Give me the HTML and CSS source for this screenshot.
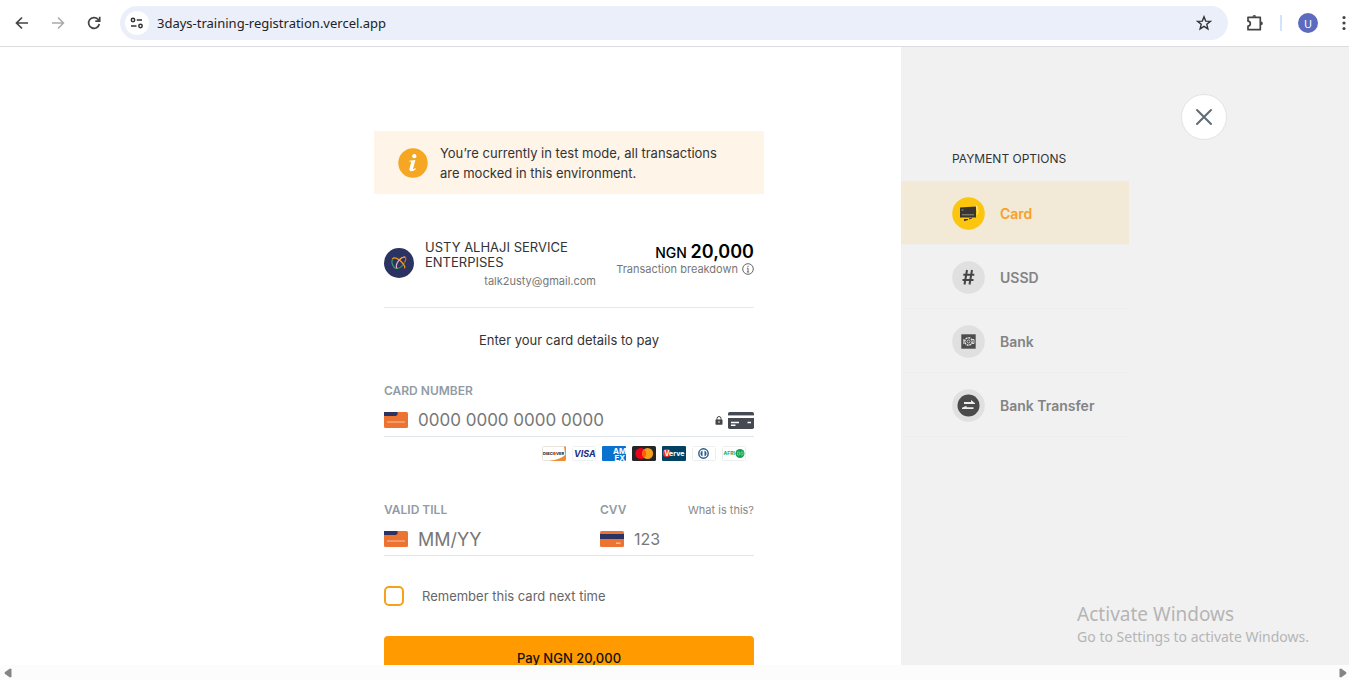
FILE: index.html
```html
<!DOCTYPE html>
<html lang="en">
<head>
    <meta charset="UTF-8">
    <meta name="viewport" content="width=device-width, initial-scale=1.0">
    <title>Checkout</title>
    <link rel="stylesheet" href="styles.css">
</head>
<body>
<header class="toolbar">
    <button class="tool" type="button" aria-label="Back">
        <svg width="16" height="16" viewBox="0 0 16 16" fill="none" stroke="#444" stroke-width="1.7"><path d="M14 8H3M8 2.5 2.5 8 8 13.5"/></svg>
    </button>
    <button class="tool" type="button" aria-label="Forward" disabled>
        <svg width="16" height="16" viewBox="0 0 16 16" fill="none" stroke="#aaa" stroke-width="1.5"><path d="M2 8h11M8 2.5 13.5 8 8 13.5"/></svg>
    </button>
    <button class="tool" type="button" aria-label="Reload">
        <svg width="16" height="16" viewBox="0 0 16 16" fill="none" stroke="#444" stroke-width="1.7"><path d="M13.3 9A5.4 5.4 0 1 1 12 4.3l1.6 1.7M13.7 1.8v4.4H9.3"/></svg>
    </button>
    <div class="address">
        <button class="site-info" type="button" aria-label="Site information">
            <svg width="14" height="12" viewBox="0 0 14 12" fill="none" stroke="#333" stroke-width="1.5"><circle cx="3" cy="3" r="1.7"/><path d="M6.8 3H12M1 9h5.5"/><circle cx="10.5" cy="9" r="1.7"/></svg>
        </button>
        <input class="url" type="text" aria-label="Address" value="3days-training-registration.vercel.app">
        <button class="star" type="button" aria-label="Bookmark">
            <svg width="16" height="16" viewBox="0 0 16 16" fill="none" stroke="#333" stroke-width="1.4"><path d="m8 1.8 1.7 4.3 4.6.3-3.5 2.9 1.1 4.6L8 11.4l-3.9 2.5 1.1-4.6-3.5-2.9 4.6-.3z"/></svg>
        </button>
    </div>
    <button class="tool extensions" type="button" aria-label="Extensions">
        <svg width="18" height="18" viewBox="0 0 18 18" fill="none" stroke="#444" stroke-width="1.7"><path d="M2 3.3h12.3v12.4H2v-3.6c3.1 0 3.1-5 0-5z" stroke-linejoin="round"/><path d="M6.5 2.7a1.8 1.8 0 0 1 3.6 0zM15 7.6a1.8 1.8 0 0 1 0 3.6z" fill="#444" stroke="none"/></svg>
    </button>
    <span class="separator"></span>
    <button class="avatar" type="button">U</button>
    <button class="tool menu" type="button" aria-label="Menu">
        <svg width="4" height="16" viewBox="0 0 4 16" fill="#444"><circle cx="2" cy="2.5" r="1.6"/><circle cx="2" cy="8" r="1.6"/><circle cx="2" cy="13.5" r="1.6"/></svg>
    </button>
</header>

<div class="page">
    <main class="content">
        <form class="checkout">
            <div class="alert">
                <svg class="alert-icon" width="30" height="30" viewBox="0 0 30 30"><circle cx="15" cy="15" r="14.7" fill="#f5a623"/><circle cx="16.3" cy="8.2" r="2.1" fill="#fff"/><path d="M11.3 12.7 17.4 11.9l-2.3 8.6c-.2 1.1.9.7 2.3-.4l.5.8c-3.3 3.3-7.2 2.7-6.5-.2l1.7-6.3c.2-.8-.4-.9-1.8-.8z" fill="#fff"/></svg>
                <p class="alert-text">You’re currently in test mode, all transactions are mocked in this environment.</p>
            </div>

            <section class="summary">
                <svg class="logo" width="30" height="30" viewBox="0 0 30 30" fill="none" stroke-width="1.2"><circle cx="15" cy="15" r="15" fill="#2a3362"/><path d="M8.500 11c-1.500 3 .3 8.500 3.500 9.400 3.300.8 7-2.900 8.500-6" stroke="#3c9d61"/><path d="M8.500 11c1.500-2.800 6.500 0 9.500 3.500 2 2.300 3.300 5 2.500 5.900" stroke="#ff9b00"/><path d="M20.500 14.400c1.500-2.400 1.800-4.600.7-5.200" stroke="#ff5805"/><path d="M21.200 9.200c-2.200-.9-6.600 2.300-8.200 6-1 2.600-.9 4.600.3 5" stroke="#f5afcb"/><path d="M15 12c2.300-2.200 4.700-3.400 6.200-2.800" stroke="#ff9b00"/></svg>
                <div class="merchant">
                    <h1 class="merchant-name">USTY ALHAJI SERVICE ENTERPISES</h1>
                    <p class="email">talk2usty@gmail.com</p>
                </div>
                <div class="total">
                    <p class="amount">NGN <strong>20,000</strong></p>
                    <button class="breakdown" type="button">Transaction breakdown
                        <svg width="12" height="12" viewBox="0 0 12 12" fill="none" stroke="#666"><circle cx="6" cy="6" r="5.3"/><path d="M6 5.2v3.9M6 2.8v1.3M4.9 9h2.2M4.9 5.3H6"/></svg>
                    </button>
                </div>
            </section>

            <h2 class="prompt">Enter your card details to pay</h2>

            <div class="field">
                <label for="card-number">CARD NUMBER</label>
                <div class="field-row">
                    <svg width="24" height="16" viewBox="0 0 24 16"><rect width="24" height="16" rx="1.5" fill="#ed7333"/><path d="M0 0h13.5v2.6L12 4H0z" fill="#2a3362"/><path d="M3 10h18" stroke="#f9c3a3"/></svg>
                    <input type="text" id="card-number" placeholder="0000 0000 0000 0000">
                    <svg width="8" height="9" viewBox="0 0 8 9"><path d="M2 4V2.5a2 2 0 0 1 4 0V4" fill="none" stroke="#444"/><rect x=".5" y="3.5" width="7" height="5.2" rx=".6" fill="#444"/><path d="M4 5v2" stroke="#ddd"/></svg>
                    <svg width="26" height="17" viewBox="0 0 26 17"><rect width="26" height="17" rx="1.7" fill="#454952"/><path d="M0 4.7h26" stroke="#fff" stroke-width="2.6"/><path d="M3 10.5h8M3 13.2h4.5M19.5 10.5H23" stroke="#fff" stroke-width="1.4"/></svg>
                </div>
            </div>

            <div class="brands">
                <svg width="24" height="15" viewBox="0 0 24 15"><rect x=".5" y=".5" width="23" height="14" rx="1" fill="#fff" stroke="#e9e3de"/><path d="M24 8v5.5a1.5 1.5 0 0 1-1.500 1.500H7c8-.8 14-3.500 17-7zM22 .5h2V8h-.8z" fill="#f18b32"/><text x="1" y="9" font-size="4" font-weight="bold" fill="#111">DISC</text><text x="14" y="9" font-size="4" font-weight="bold" fill="#111">VER</text><circle cx="12.2" cy="7.5" r="1.7" fill="#e86b25"/></svg>
                <svg width="24" height="15" viewBox="0 0 24 15"><rect x=".5" y=".5" width="23" height="14" rx="1" fill="#fff" stroke="#f0f0f0"/><text x="2" y="11" font-size="9" font-style="italic" font-weight="bold" fill="#252d7f">VISA</text></svg>
                <svg width="24" height="15" viewBox="0 0 24 15"><rect width="24" height="15" rx="1" fill="#0872ce"/><text x="11" y="7.5" font-size="8" font-weight="bold" fill="#fff">AM</text><text x="12.5" y="14.5" font-size="8" font-weight="bold" fill="#fff">EX</text></svg>
                <svg width="24" height="15" viewBox="0 0 24 15"><rect width="24" height="15" rx="1.5" fill="#252525"/><circle cx="8.8" cy="7.5" r="5.5" fill="#eb001b"/><circle cx="15.6" cy="7.5" r="5.5" fill="#f79e1b"/><path d="M12.2 3.2a5.5 5.5 0 0 1 0 8.6 5.5 5.5 0 0 1 0-8.6z" fill="#ff5f00"/></svg>
                <svg width="24" height="15" viewBox="0 0 24 15"><rect width="24" height="15" rx="1" fill="#00425f"/><circle cx="4.8" cy="7" r="4" fill="#ee312a"/><text x="2.3" y="10" font-size="7" font-weight="bold" fill="#fff">Verve</text></svg>
                <svg width="24" height="15" viewBox="0 0 24 15"><rect x=".5" y=".5" width="23" height="14" rx="1" fill="#fff" stroke="#eee"/><circle cx="11.5" cy="7.5" r="4.7" fill="none" stroke="#285b8c" stroke-width="1.4"/><path d="M10.5 4.5a3.2 3.2 0 0 0 0 6zM12.5 4.5a3.2 3.2 0 0 1 0 6z" fill="#285b8c"/></svg>
                <svg width="24" height="15" viewBox="0 0 24 15"><rect x=".5" y=".5" width="23" height="14" rx="1" fill="#fff" stroke="#eee"/><text x="1.5" y="9.300" font-size="5" font-weight="bold" fill="#27a45b">AFRI</text><circle cx="18" cy="7.5" r="4.5" fill="#12a350"/><path d="M15.500 6v3h2V6zm3.500 0v3h2V6z" fill="none" stroke="#8bd3aa" stroke-width=".7"/></svg>
            </div>

            <div class="field-group">
                <div class="field expiry">
                    <label for="expiry">VALID TILL</label>
                    <div class="field-row">
                        <svg width="24" height="16" viewBox="0 0 24 16"><rect width="24" height="16" rx="1.5" fill="#ed7333"/><path d="M0 0h13.5v2.6L12 4H0z" fill="#2a3362"/><path d="M3 10h18" stroke="#f9c3a3"/></svg>
                        <input class="expiry-input" type="text" id="expiry" placeholder="MM/YY">
                    </div>
                </div>
                <div class="field cvv">
                    <div class="label-row">
                        <label for="cvv">CVV</label>
                        <a class="help" href="#">What is this?</a>
                    </div>
                    <div class="field-row">
                        <svg width="24" height="16" viewBox="0 0 24 16"><rect width="24" height="16" rx="1.5" fill="#ed7333"/><path d="M0 3h24v5H0z" fill="#2a3362"/><path d="M16 12.2h4.5" stroke="#f9c3a3" stroke-width="1.4"/></svg>
                        <input class="cvv-input" type="text" id="cvv" placeholder="123">
                    </div>
                </div>
            </div>

            <div class="remember">
                <input type="checkbox" id="remember">
                <label for="remember">Remember this card next time</label>
            </div>

            <button class="pay" type="submit">Pay NGN 20,000</button>
        </form>
    </main>

    <aside class="sidebar">
        <nav class="options">
            <h2 class="options-title">PAYMENT OPTIONS</h2>
            <button class="option active" type="button">
                <svg width="33" height="33" viewBox="0 0 33 33"><circle cx="16.5" cy="16.5" r="16.3" fill="#fcc60e"/><path d="m22 10 3-.8v4l1-.3-.5 4-1 .5" fill="none" stroke="#fff0b0"/><path d="M8 10.5 24 9.5v11H8z" fill="#3a3530"/><path d="M10 17.8h12M9.5 13h2" stroke="#99917b"/><path d="M12 22.5h4l-4 1.200M17 22l3-1" stroke="#3a3530" fill="none"/></svg>
                Card
            </button>
            <button class="option" type="button">
                <svg width="33" height="33" viewBox="0 0 33 33" fill="none" stroke="#444" stroke-width="2"><circle cx="16.5" cy="16.5" r="16.3" fill="#e0e0e0" stroke="none"/><path d="m15 9-2.500 14.500M20 9l-2.500 14.500M11.300 13.700h11M10.500 19h11"/></svg>
                USSD
            </button>
            <button class="option" type="button">
                <svg width="33" height="33" viewBox="0 0 33 33" fill="none"><circle cx="16.5" cy="16.5" r="16.3" fill="#e0e0e0"/><path d="M9.3 9.3h14.4v14.4H9.3z" fill="#4d4d4d"/><g stroke="#e5e5e5"><circle cx="16.5" cy="16.5" r="3.7" stroke-width="1.4" stroke-dasharray="2 .8"/><circle cx="16.5" cy="16.5" r="1.5" stroke-width=".8"/><path d="M11.800 14v5M19.500 14.500h2.500v4h-2.500" stroke-width=".9"/></g></svg>
                Bank
            </button>
            <button class="option" type="button">
                <svg width="33" height="33" viewBox="0 0 33 33"><circle cx="16.5" cy="16.5" r="16.3" fill="#e0e0e0"/><circle cx="16.5" cy="16.5" r="11" fill="#4a4a4a"/><path d="M12 13h7v-2l4 3.300v.7H12zM21.500 18.200h-7v-1.500l-4.500 2v1.400h11.500z" fill="#eee"/></svg>
                Bank Transfer
            </button>
        </nav>
        <button class="close" type="button" aria-label="Close">
            <svg width="18" height="18" viewBox="0 0 18 18" fill="none" stroke="#5f6b75" stroke-width="2" stroke-linecap="round"><path d="m2 2 14 14M16 2 2 16"/></svg>
        </button>
    </aside>
</div>

<footer class="scrollbar">
    <svg width="8" height="10" viewBox="0 0 8 10" fill="#858585"><path d="M7.5 1v8L6 9.500 1 6Q0 5 1 4L6 .5z"/></svg>
    <svg width="8" height="10" viewBox="0 0 8 10" fill="#858585"><path d="M.5 1v8l1.500.5L7 6q1-1 0-2L2 .5z"/></svg>
</footer>

<div class="watermark">
    <p class="watermark-title">Activate Windows</p>
    <p>Go to Settings to activate Windows.</p>
</div>
</body>
</html>
```

FILE: styles.css
```css
* {
    box-sizing: border-box;
}
body {
    display: flex;
    flex-direction: column;
    height: 100vh;
    margin: 0;
    overflow: hidden;
    font-family: Inter, "Liberation Sans", sans-serif;
    background-color: #fff;
    color: #333;
}
h1,
h2,
p {
    margin: 0;
    font-weight: 400;
}
button,
input {
    padding: 0;
    border: none;
    background: none;
    font-family: inherit;
}
button {
    cursor: pointer;
}
svg {
    display: block;
    flex-shrink: 0;
}

/* browser bar */
.toolbar {
    display: flex;
    flex-shrink: 0;
    align-items: center;
    height: 47px;
    padding-left: 14px;
    border-bottom: 1px solid #dcdcdc;
    font-family: "Noto Sans", "Open Sans", sans-serif;
}
.tool {
    margin-right: 20px;
}
.address {
    display: flex;
    flex: 1;
    align-items: center;
    height: 34px;
    margin-left: -2px;
    padding: 0 16px 0 5px;
    border-radius: 17px;
    background-color: #ebeff9;
}
.site-info {
    display: flex;
    align-items: center;
    justify-content: center;
    width: 24px;
    height: 24px;
    border-radius: 50%;
    background-color: #fff;
}
.url {
    flex: 1;
    margin-left: 8px;
    font-size: 13px;
    color: #222;
}
.extensions {
    margin: 0 16px 0 18px;
}
.separator {
    width: 2px;
    height: 16px;
    background-color: #d5e2fb;
}
.avatar {
    width: 20px;
    height: 20px;
    margin: 0 24px 0 16px;
    border-radius: 50%;
    background-color: #5c6bc0;
    color: #fff;
    font-size: 11px;
}
.menu {
    margin-right: 3px;
}

.page {
    display: flex;
    flex: 1;
    min-height: 0;
    overflow: hidden;
}
.content {
    display: flex;
    flex: 1;
    align-items: flex-start;
    justify-content: flex-end;
    padding: 84px 137px 0 0;
}
.checkout {
    width: 390px;
    padding-bottom: 40px;
}
.alert {
    display: flex;
    align-items: center;
    gap: 12px;
    padding: 12px 24px 11px;
    background-color: #fff4e8;
}
.alert-text {
    font-size: 13px;
    line-height: 20px;
}

.summary {
    display: flex;
    align-items: flex-start;
    margin: 0 10px;
    padding: 46px 0 20px;
    border-bottom: 1px solid #e4e9ea;
}
.logo {
    margin: 8px 11px 0 0;
}
.merchant {
    width: 171px;
}
.merchant-name {
    font-size: 13px;
    line-height: 15px;
}
/* the mail line is cropped a little below the baseline */
.email {
    height: 13px;
    margin-top: 4px;
    overflow: hidden;
    font-size: 11px;
    line-height: 15px;
    text-align: right;
    color: #777;
}
.total {
    flex: 1;
    padding-top: 3px;
    text-align: right;
}
.amount {
    font-size: 14px;
    font-weight: 500;
    line-height: 18px;
    color: #000;
}
.amount strong {
    font-size: 18px;
    font-weight: 600;
}
.breakdown {
    display: flex;
    align-items: center;
    justify-content: flex-end;
    gap: 4px;
    width: 100%;
    font-size: 11px;
    line-height: 14px;
    white-space: nowrap;
    color: #777;
}
.prompt {
    margin: 22px 0 34px;
    font-size: 13px;
    line-height: 20px;
    text-align: center;
}

.field {
    margin: 0 10px;
}
.field label {
    display: block;
    font-size: 12px;
    font-weight: 600;
    line-height: 14px;
    color: #929ba5;
}
.field-row {
    display: flex;
    align-items: center;
    height: 39px;
    padding-top: 6px;
    border-bottom: 1px solid #e0e7ec;
    gap: 5px;
}
.field-row input {
    flex: 1;
    min-width: 0;
    height: 24px;
    margin-left: 5px;
    font-size: 17px;
    color: #333;
}
.field-row input::placeholder {
    color: #777;
    opacity: 1;
}
.field-row .expiry-input {
    font-size: 18px;
}
.field-row .cvv-input {
    font-size: 16px;
}
.brands {
    display: flex;
    justify-content: flex-end;
    gap: 6px;
    margin: 9px 18px 42px 0;
}
.field-group {
    display: flex;
    margin: 0 10px;
}
.field-group .field {
    margin: 0;
}
.expiry {
    flex: 1;
    min-width: 0;
}
.cvv {
    width: 154px;
}
.label-row {
    display: flex;
    justify-content: space-between;
}
.help {
    font-size: 11px;
    line-height: 14px;
    text-decoration: none;
    color: #888;
}
.remember {
    display: flex;
    align-items: center;
    gap: 18px;
    margin: 30px 10px;
    font-size: 13px;
    line-height: 20px;
    color: #666;
}
.remember input {
    appearance: none;
    width: 20px;
    height: 20px;
    margin: 0;
    border: 2px solid #f5a11c;
    border-radius: 5px;
}
.pay {
    display: block;
    width: calc(100% - 20px);
    height: 44px;
    margin: 0 10px;
    border-radius: 4px;
    background-color: #ff9b00;
    font-size: 13px;
    font-weight: 500;
    color: #111;
}

/* payment options */
.sidebar {
    display: flex;
    align-items: flex-start;
    align-self: stretch;
    width: 448px;
    background-color: #f1f1f1;
}
.options {
    width: 228px;
    padding-top: 102px;
}
.options-title {
    margin: 0 0 12px 51px;
    font-size: 12px;
    line-height: 20px;
}
.option {
    display: flex;
    align-items: center;
    gap: 15px;
    width: 100%;
    height: 64px;
    padding: 2px 0 0 51px;
    border-bottom: 1px solid #eee;
    font-size: 14px;
    font-weight: 600;
    color: #838383;
}
.option.active {
    background-color: #f2ead7;
    color: #f7a028;
}
.close {
    display: flex;
    align-items: center;
    justify-content: center;
    width: 46px;
    height: 46px;
    margin: 47px 0 0 52px;
    border: 1px solid #e3e3e3;
    border-radius: 50%;
    background-color: #fff;
}

.scrollbar {
    display: flex;
    flex-shrink: 0;
    align-items: center;
    justify-content: space-between;
    height: 15px;
    padding: 0 2px 0 4px;
    background-color: #fcfcfc;
}
.watermark {
    position: absolute;
    right: 40px;
    bottom: 33px;
    font-family: "Noto Sans", "Open Sans", sans-serif;
    font-size: 14px;
    line-height: 20px;
    color: #b5b5b5;
}
.watermark-title {
    font-size: 19px;
    line-height: 26px;
}
```
